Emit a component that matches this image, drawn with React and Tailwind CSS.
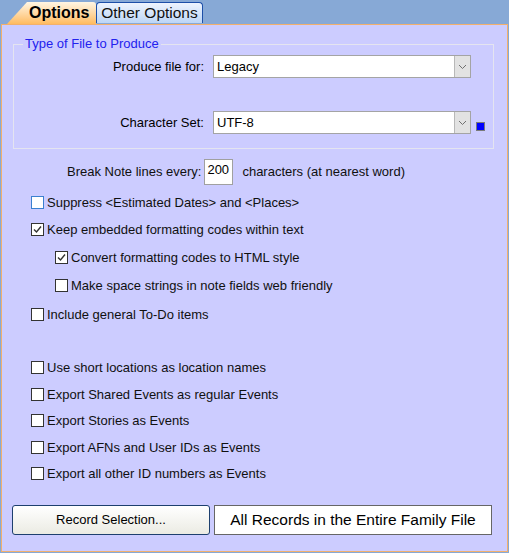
import React from 'react'

const Chevron = () => (
    <svg width="9" height="6" viewBox="0 0 9 6">
        <polyline points="1,1 4.5,4.5 8,1" fill="none" stroke="#707070" strokeWidth="1" />
    </svg>
)

const Select = ({ value }) => (
    <div className="flex w-[258px] h-[23px] border border-[#a4a4a4] bg-white">
        <div className="flex-1 flex items-center pl-[3px] text-[13px] text-black">{value}</div>
        <div className="w-[16px] h-full flex items-center justify-center bg-[#e2e2e2] border-l border-[#b8b8b8]">
            <Chevron />
        </div>
    </div>
)

const Check = ({ checked, focus, label, className }) => (
    <div className={`flex items-center h-[16px] ${className}`}>
        <div className={`w-[13px] h-[13px] bg-white border flex items-center justify-center ${focus ? 'border-[#3b80d0]' : 'border-[#333333]'}`}>
            {checked && (
                <svg width="11" height="11" viewBox="0 0 11 11">
                    <polyline points="2,5.5 4.5,8 9,2.5" fill="none" stroke="#333" strokeWidth="1.4" />
                </svg>
            )}
        </div>
        <span className="ml-[3px] text-[13px] text-[#101010] leading-none">{label}</span>
    </div>
)

const App = () => {
    return (
        <div className="w-[509px] h-[553px] bg-[#87a9d6] flex flex-col font-['Liberation_Sans',Arial,sans-serif]">
            {/* tabs */}
            <div className="h-[24px] flex items-end pl-[7px]">
                <div className="w-[89px] h-[22px] pl-[22px] flex items-center rounded-tr-[3px] bg-gradient-to-b from-[#fff6e4] to-[#ffbb5e] [clip-path:polygon(0_100%,20px_0,100%_0,100%_100%)]">
                    <span className="text-[16px] font-bold text-black leading-none">Options</span>
                </div>
                <div className="w-[107px] h-[21px] mb-[1px] flex items-center justify-center rounded-t-[4px] border border-b-0 border-[#1d4fa8] bg-gradient-to-b from-[#eef4fe] to-[#bcd6f6]">
                    <span className="text-[15.5px] text-[#101010] leading-none">Other Options</span>
                </div>
            </div>

            {/* panel */}
            <div className="ml-[1px] w-[507px] h-[528px] bg-[#ccccff] border border-[#f2b06c] flex flex-col">
                {/* group box */}
                <div className="relative ml-[11px] mt-[19px] w-[481px] h-[105px] border border-[#e4e4f0] pt-[10px]">
                    <span className="absolute left-[9px] top-[-8px] px-[2px] bg-[#ccccff] text-[13px] text-[#2222ee] leading-none">Type of File to Produce</span>
                    <div className="flex items-center">
                        <div className="w-[190px] text-right text-[13px] text-black">Produce file for:</div>
                        <div className="ml-[9px]"><Select value="Legacy" /></div>
                    </div>
                    <div className="flex items-center mt-[33px]">
                        <div className="w-[190px] text-right text-[13px] text-black">Character Set:</div>
                        <div className="ml-[9px]"><Select value="UTF-8" /></div>
                        <div className="ml-[5px] mt-[7px] w-[9px] h-[9px] border border-[#7a7a7a] bg-[#0000ff]" />
                    </div>
                </div>

                {/* break note */}
                <div className="flex items-center mt-[10px] pl-[65px]">
                    <span className="text-[13px] text-[#101010]">Break Note lines every:</span>
                    <div className="ml-[3px] w-[29px] h-[26px] bg-white border border-[#a0a0a0] pl-[2px] pt-[3px] text-[13px] text-black leading-none">200</div>
                    <span className="ml-[9px] text-[13px] text-[#101010]">characters (at nearest word)</span>
                </div>

                <Check className="mt-[9px] pl-[29px]" focus label="Suppress <Estimated Dates> and <Places>" />
                <Check className="mt-[11px] pl-[29px]" checked label="Keep embedded formatting codes within text" />
                <Check className="mt-[12px] pl-[53px]" checked label="Convert formatting codes to HTML style" />
                <Check className="mt-[12px] pl-[53px]" label="Make space strings in note fields web friendly" />
                <Check className="mt-[13px] pl-[29px]" label="Include general To-Do items" />

                <Check className="mt-[37px] pl-[29px]" label="Use short locations as location names" />
                <Check className="mt-[11px] pl-[29px]" label="Export Shared Events as regular Events" />
                <Check className="mt-[10px] pl-[29px]" label="Export Stories as Events" />
                <Check className="mt-[11px] pl-[29px]" label="Export AFNs and User IDs as Events" />
                <Check className="mt-[10px] pl-[29px]" label="Export all other ID numbers as Events" />

                {/* bottom */}
                <div className="flex mt-[24px] ml-[10px] gap-[4px]">
                    <button className="w-[198px] h-[30px] rounded-[3px] border border-[#1d3f6e] bg-gradient-to-b from-[#ffffff] to-[#ebebe3] text-[13px] text-black">
                        Record Selection...
                    </button>
                    <div className="w-[278px] h-[30px] bg-white border border-[#666666] flex items-center justify-center text-[15.5px] text-black">
                        All Records in the Entire Family File
                    </div>
                </div>
            </div>
        </div>
    )
}

export default App
